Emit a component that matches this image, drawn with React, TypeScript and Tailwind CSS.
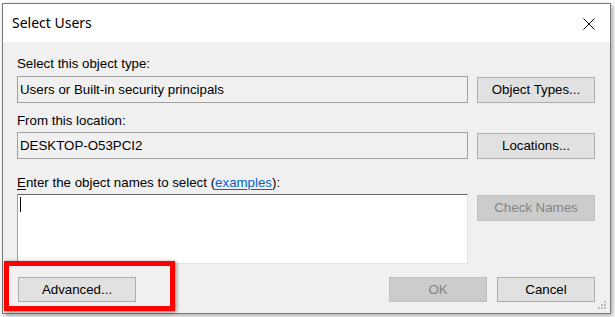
import React from "react";

const body = "font-['Liberation_Sans',Arial,sans-serif] text-[13.3px] leading-[16px] text-black";

function Btn({ label, disabled, className = "" }: { label: string; disabled?: boolean; className?: string }) {
  return (
    <div
      className={
        "flex items-center justify-center border " +
        (disabled
          ? "bg-[#cccccc] border-[#bfbfbf] text-[#838383] "
          : "bg-[#e1e1e1] border-[#adadad] text-black ") +
        className
      }
    >
      {label}
    </div>
  );
}

export default function App() {
  return (
    <div className={"relative w-[615px] h-[317px] bg-white pt-[3px] pl-[2px] overflow-hidden " + body}>
      <div className="relative w-[609px] h-[311px] border border-[#7a7a7a] flex flex-col shadow-[2px_2px_5px_rgba(0,0,0,0.35)]">
        {/* title bar */}
        <div className="h-[38px] bg-white flex items-center justify-between pl-[9px] pr-[15px]">
          <span className="font-['Noto_Sans',sans-serif] text-[14px] leading-[20px] text-black">Select Users</span>
          <svg width="12" height="12" viewBox="0 0 12 12" className="mt-[1px]">
            <path d="M0.5 0.5 L11.5 11.5 M11.5 0.5 L0.5 11.5" stroke="#000" strokeWidth="1" fill="none" />
          </svg>
        </div>
        {/* body */}
        <div className="flex-1 bg-[#f0f0f0] pl-[14px] pr-[15px] pt-[14px] flex flex-col">
          <div>Select this object type:</div>
          <div className="flex gap-[9px] mt-[4px]">
            <div className="w-[451px] h-[27px] border border-[#a0a0a0] flex items-center pl-[2px]">
              Users or Built-in security principals
            </div>
            <Btn label="Object Types..." className="w-[118px] h-[26px] mt-[1px]" />
          </div>

          <div className="mt-[10px]">From this location:</div>
          <div className="flex gap-[9px] mt-[3px]">
            <div className="w-[451px] h-[27px] border border-[#a0a0a0] flex items-center pl-[2px]">
              DESKTOP-O53PCI2
            </div>
            <Btn label="Locations..." className="w-[118px] h-[26px] mt-[1px]" />
          </div>

          <div className="mt-[16px]">
            <span className="underline underline-offset-2">E</span>nter the object names to select (
            <span className="text-[#0066cc] underline underline-offset-2">examples</span>):
          </div>
          <div className="flex gap-[9px] mt-[3px]">
            <div className="w-[451px] h-[70px] bg-white border border-t-[#646464] border-l-[#a0a0a0] border-r-[#e3e3e3] border-b-[#e3e3e3] pl-[2px] pt-[2px]">
              <div className="w-[1px] h-[15px] bg-black" />
            </div>
            <Btn label="Check Names" disabled className="w-[118px] h-[26px] mt-[1px]" />
          </div>

          <div className="flex items-center mt-[13px]">
            <Btn label="Advanced..." className="w-[118px] h-[25px] ml-[1px]" />
            <div className="flex-1" />
            <Btn label="OK" disabled className="w-[98px] h-[25px]" />
            <Btn label="Cancel" className="w-[98px] h-[25px] ml-[10px]" />
          </div>
        </div>
        {/* resize grip */}
        <svg width="10" height="10" viewBox="0 0 10 10" className="absolute right-[3px] bottom-[2px]">
          <rect x="7" y="0" width="2" height="2" fill="#bcbcbc" />
          <rect x="4" y="3" width="2" height="2" fill="#bcbcbc" />
          <rect x="7" y="3" width="2" height="2" fill="#bcbcbc" />
          <rect x="1" y="6" width="2" height="2" fill="#bcbcbc" />
          <rect x="4" y="6" width="2" height="2" fill="#bcbcbc" />
          <rect x="7" y="6" width="2" height="2" fill="#bcbcbc" />
        </svg>
      </div>
      {/* red highlight */}
      <div className="absolute left-[4px] top-[261px] w-[171px] h-[50px] border-[5px] border-[#ff0000] shadow-[1px_1px_4px_rgba(0,0,0,0.5)]" />
    </div>
  );
}
